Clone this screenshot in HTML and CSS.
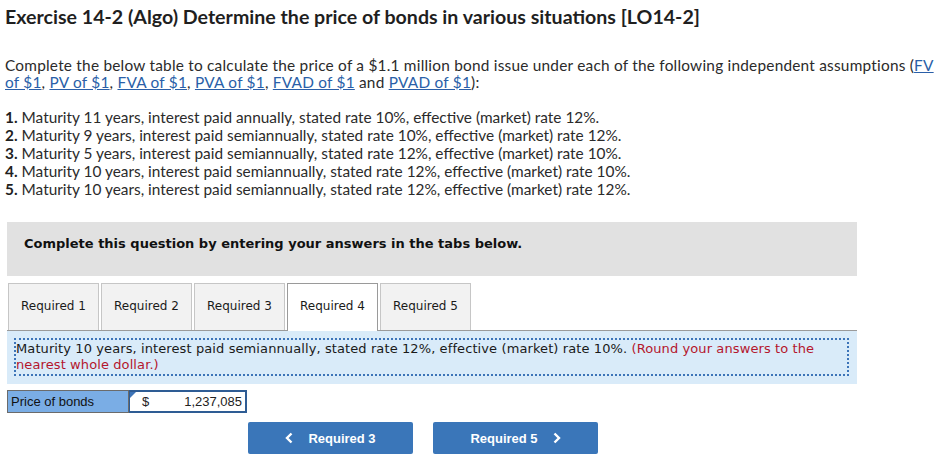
FILE: index.html
```html
<!DOCTYPE html>
<html>
<head>
  <meta charset="utf-8">
  <title>Exercise 14-2 (Algo)</title>
  <link rel="stylesheet" href="styles.css">
</head>
<body>
<div class="page">
  <h1 class="title">Exercise 14-2 (Algo) Determine the price of bonds in various situations [LO14-2]</h1>

  <p class="intro">Complete the below table to calculate the price of a $1.1 million bond issue under each of the following independent assumptions (<a href="#">FV of $1</a>, <a href="#">PV of $1</a>, <a href="#">FVA of $1</a>, <a href="#">PVA of $1</a>, <a href="#">FVAD of $1</a> and <a href="#">PVAD of $1</a>):</p>

  <ol class="cases">
    <li><b>1.</b> Maturity 11 years, interest paid annually, stated rate 10%, effective (market) rate 12%.</li>
    <li><b>2.</b> Maturity 9 years, interest paid semiannually, stated rate 10%, effective (market) rate 12%.</li>
    <li><b>3.</b> Maturity 5 years, interest paid semiannually, stated rate 12%, effective (market) rate 10%.</li>
    <li><b>4.</b> Maturity 10 years, interest paid semiannually, stated rate 12%, effective (market) rate 10%.</li>
    <li><b>5.</b> Maturity 10 years, interest paid semiannually, stated rate 12%, effective (market) rate 12%.</li>
  </ol>

  <div class="work">
    <div class="notice">Complete this question by entering your answers in the tabs below.</div>

    <div class="tabs">
      <div class="tab">Required 1</div>
      <div class="tab">Required 2</div>
      <div class="tab">Required 3</div>
      <div class="tab tab--active">Required 4</div>
      <div class="tab">Required 5</div>
    </div>

    <div class="panel">
      <div class="panel__text">Maturity 10 years, interest paid semiannually, stated rate 12%, effective (market) rate 10%. <span class="hint">(Round your answers to the nearest whole dollar.)</span></div>
    </div>

    <div class="answer">
      <div class="answer__label">Price of bonds</div>
      <div class="answer__input">
        <span class="answer__cur">$</span>
        <span class="answer__val">1,237,085</span>
      </div>
    </div>

    <div class="nav">
      <button class="nav__btn">
        <svg class="chev" width="8" height="12" viewBox="0 0 8 12"><polyline points="6.5,1.5 2,6 6.5,10.5" fill="none" stroke="#fff" stroke-width="2.4"/></svg>
        Required 3
      </button>
      <button class="nav__btn">
        Required 5
        <svg class="chev" width="8" height="12" viewBox="0 0 8 12"><polyline points="1.5,1.5 6,6 1.5,10.5" fill="none" stroke="#fff" stroke-width="2.4"/></svg>
      </button>
    </div>
  </div>
</div>
</body>
</html>
```

FILE: styles.css
```css
* {
	box-sizing: border-box;
}

body {
	margin: 0;
	background: #fff;
	color: #2b2b2b;
	font-family: Lato, "Open Sans", sans-serif;
}

.page {
	padding: 5px 0 0 5px;
}

.title {
	margin: 0;
	font-size: 19.6px;
	font-weight: 700;
	line-height: 24px;
	color: #1f1f1f;
}

.intro {
	margin: 28px 0 0;
	font-size: 15.4px;
	line-height: 16.5px;
	letter-spacing: 0.22px;
	padding-right: 0;
}

.intro a {
	color: #2a5fa8;
	text-decoration: underline;
}

.cases {
	list-style: none;
	margin: 18px 0 0;
	padding: 0;
	font-size: 15.4px;
	line-height: 18px;
}

.cases b {
	font-weight: 700;
	color: #1f1f1f;
}

.work {
	margin: 24px 0 0 2px;
	width: 850px;
	font-family: "DejaVu Sans", Verdana, sans-serif;
}

.notice {
	background: #e1e1e1;
	height: 54px;
	padding: 14px 0 0 17px;
	font-size: 13px;
	font-weight: 700;
	color: #111;
}

.tabs {
	display: flex;
	gap: 2px;
	margin-top: 7px;
	padding-left: 1px;
	border-bottom: 1px solid #9a9a9a;
}

.tab {
	width: 91px;
	height: 47px;
	line-height: 45px;
	text-align: center;
	background: #f2f2f2;
	border: 1px solid #c6c6c6;
	border-bottom: none;
	font-size: 12px;
	color: #1a1a1a;
}

.tab--active {
	background: #fff;
	border-color: #9a9a9a;
	margin-bottom: -1px;
	height: 48px;
}

.panel {
	background: #d9ebf9;
	padding: 7px 8px 8px 7px;
}

.panel__text {
	border: 2px dotted #3d74b8;
	padding: 1px 6px 1px 0;
	font-size: 13px;
	letter-spacing: 0.1px;
	line-height: 16px;
	color: #1a1a1a;
}

.hint {
	color: #b4162d;
}

.answer {
	display: flex;
	margin-top: 6px;
	font-family: "Liberation Sans", Arial, sans-serif;
	font-size: 13px;
}

.answer__label {
	width: 122px;
	height: 23px;
	line-height: 21px;
	padding-left: 3px;
	background: #7aade5;
	border: 1px solid #6b6b6b;
	color: #111;
}

.answer__input {
	position: relative;
	display: flex;
	justify-content: space-between;
	width: 118px;
	height: 23px;
	line-height: 19px;
	padding: 0 3px 0 12px;
	border: 2px solid #2e5c94;
	border-left-width: 1px;
	background: #fff;
	color: #222;
}

.answer__input::before {
	content: '';
	position: absolute;
	top: 0;
	left: 0;
	border-top: 6px solid #3d74b8;
	border-right: 6px solid transparent;
}

.nav {
	display: flex;
	gap: 20px;
	margin: 9px 0 0 241px;
}

.nav__btn {
	display: flex;
	align-items: center;
	justify-content: center;
	gap: 15px;
	width: 165px;
	height: 32px;
	border: none;
	border-radius: 2px;
	background: #3a76b9;
	color: #fff;
	font-family: "Liberation Sans", Arial, sans-serif;
	font-size: 13px;
	font-weight: 700;
}
```
